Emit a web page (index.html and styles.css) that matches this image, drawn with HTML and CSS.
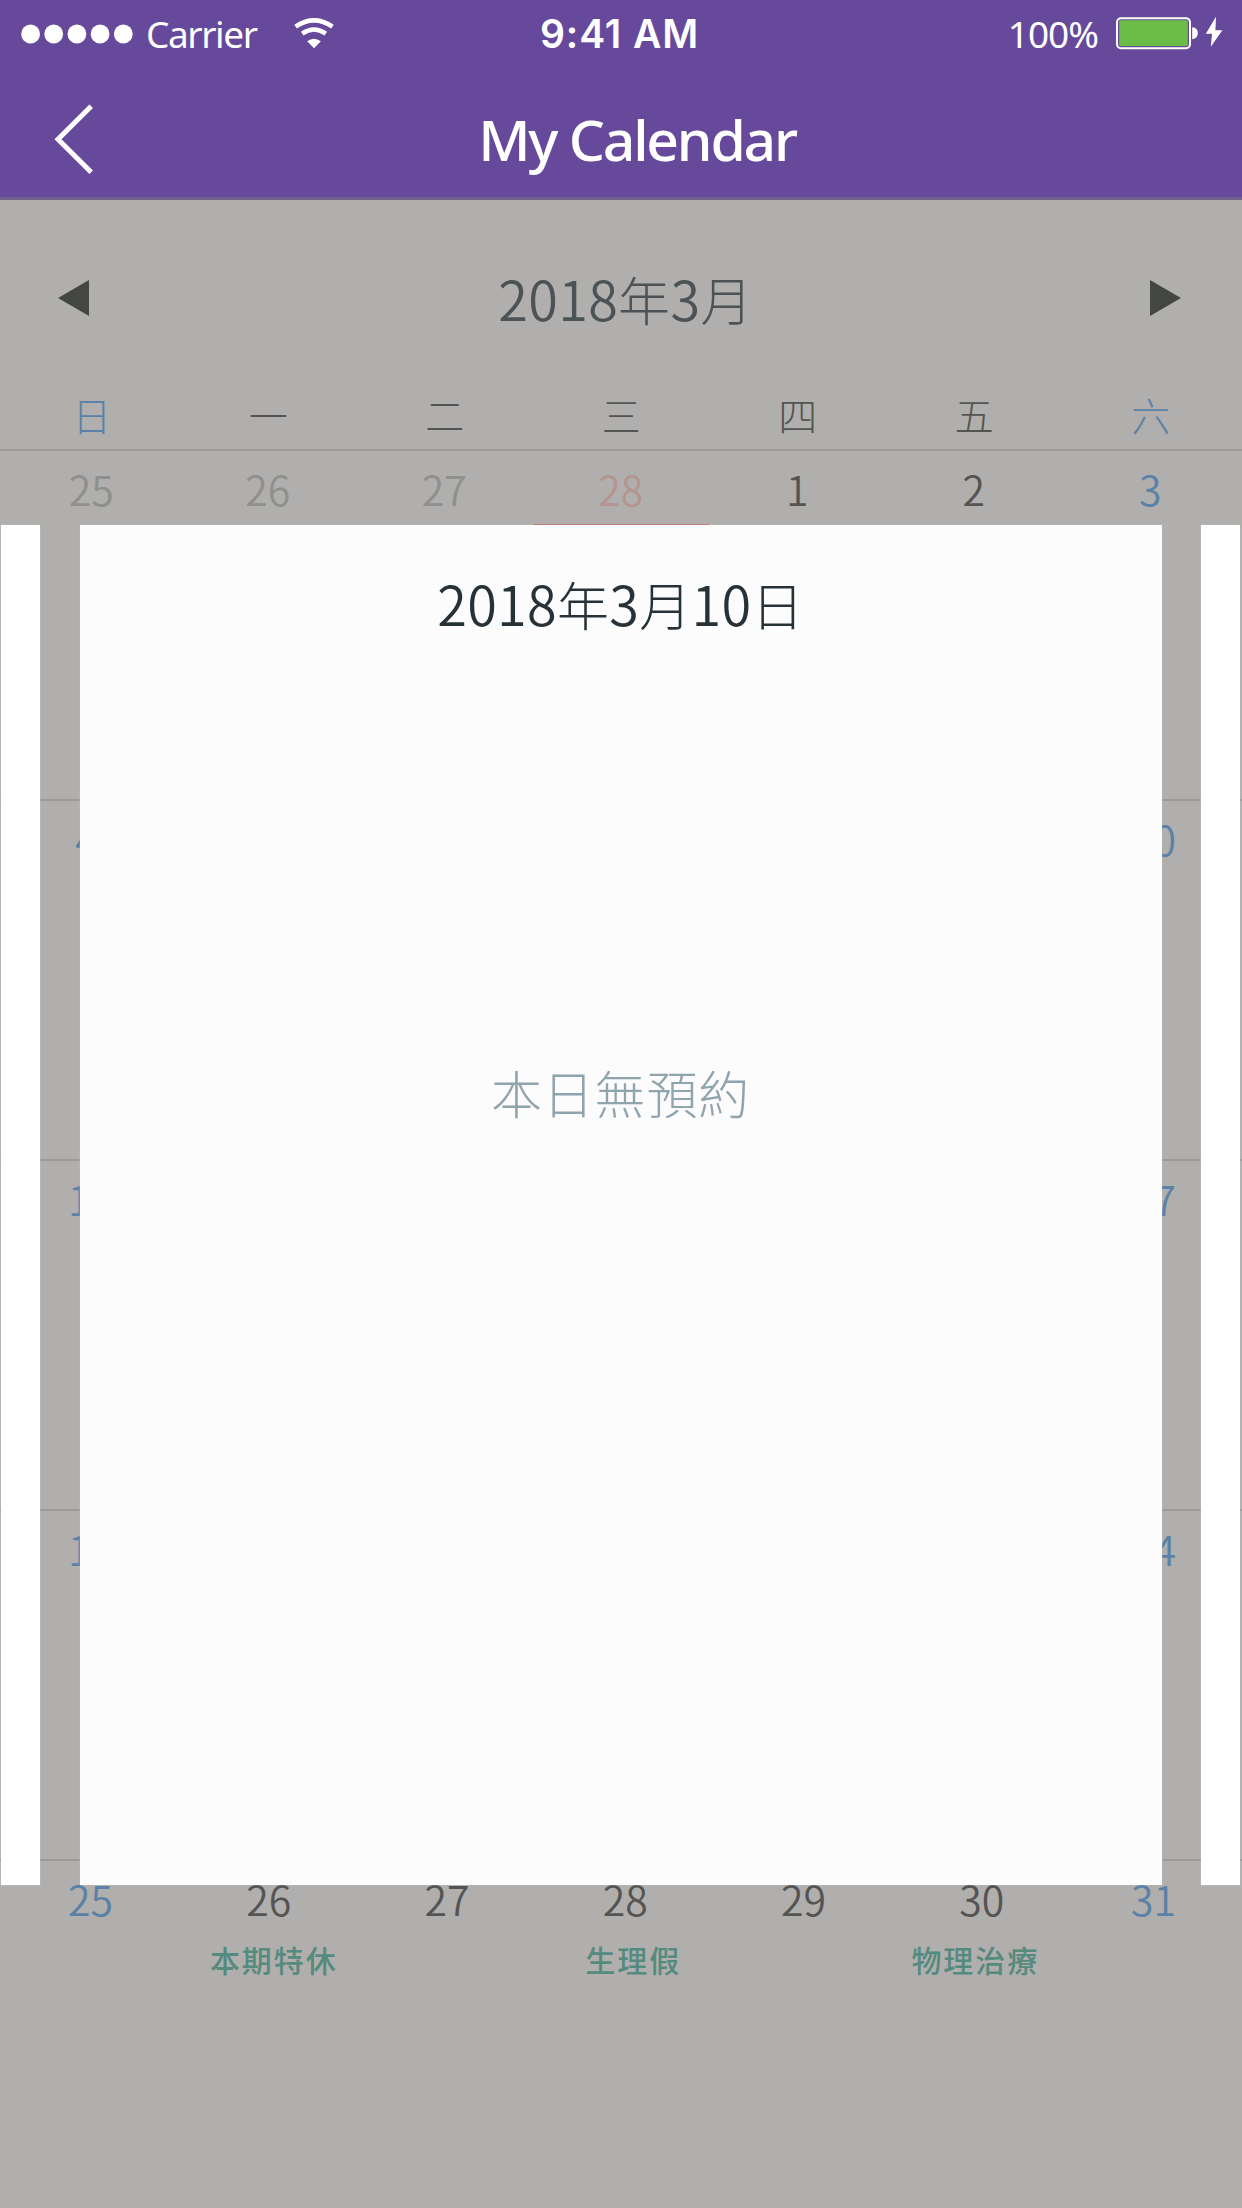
FILE: index.html
```html
<!DOCTYPE html>
<html lang="zh-Hant">
<head>
<meta charset="utf-8">
<title>My Calendar</title>
<link rel="stylesheet" href="styles.css">
</head>
<body>
<div class="screen">
  <header class="header">
    <div class="status">
      <div class="status-left">
        <svg class="dots" width="112" height="20" viewBox="0 0 112 20" fill="#fff"><circle cx="9.6" cy="10" r="9.4"/><circle cx="32.7" cy="10" r="9.4"/><circle cx="55.9" cy="10" r="9.4"/><circle cx="79.1" cy="10" r="9.4"/><circle cx="102.3" cy="10" r="9.4"/></svg>
        <span class="carrier">Carrier</span>
        <svg class="wifi" width="40" height="31" viewBox="0 0 40 31"><g fill="none" stroke="#fff" stroke-width="4.6"><path d="M1.6 8.6Q20-4 38.4 8.6"/><path d="M8.2 15.6Q20 7.4 31.8 15.6"/></g><path d="M13.2 23.2Q20 18.2 26.8 23.2L20 30.3Z" fill="#fff"/></svg>
      </div>
      <span class="time">9:41 AM</span>
      <div class="status-right">
        <span class="percent">100%</span>
        <svg class="battery" width="108" height="36" viewBox="0 0 108 36"><rect x="1" y="3.2" width="73" height="30" rx="4" fill="none" stroke="#fff" stroke-width="2"/><rect x="3.2" y="5.3" width="68.6" height="25.6" rx="1" fill="#6cbd48"/><path d="M76.2 12.2C80 12.6 81.8 14.8 81.8 18S80 23.8 76.2 24.2Z" fill="#fff"/><path d="M100 1.8L89.8 18.8H96L94.8 31.8L106.4 15.2H99.4Z" fill="#fff"/></svg>
      </div>
    </div>
    <div class="navbar">
      <svg class="back" width="40" height="72" viewBox="0 0 40 72" fill="none" stroke="#fff" stroke-width="5"><path d="M38.2 3.2L5 36.2L38.2 69.2"/></svg>
      <h1 class="nav-title">My Calendar</h1>
    </div>
  </header>
  <main class="calendar">
    <div class="month">
      <svg width="31" height="36" viewBox="0 0 31 36" fill="#444644"><path d="M31 0V36L0 18Z"/></svg>
      <h2 class="month-title">2018<span class="cjk">年</span>3<span class="cjk">月</span></h2>
      <svg width="31" height="36" viewBox="0 0 31 36" fill="#444644"><path d="M0 0V36L31 18Z"/></svg>
    </div>
    <div class="weekdays">
      <span class="weekend">日</span><span>一</span><span>二</span><span>三</span><span>四</span><span>五</span><span class="weekend">六</span>
    </div>
    <div class="week first">
      <div class="day muted">25</div><div class="day muted">26</div><div class="day muted">27</div><div class="day holiday">28<div class="holiday-box"></div></div><div class="day">1</div><div class="day">2</div><div class="day weekend">3</div>
    </div>
    <div class="week tall">
      <div class="day weekend single">4</div><div class="day">5</div><div class="day">6</div><div class="day">7</div><div class="day">8</div><div class="day">9</div><div class="day weekend">10</div>
    </div>
    <div class="week">
      <div class="day weekend">11</div><div class="day">12</div><div class="day">13</div><div class="day">14</div><div class="day">15</div><div class="day">16</div><div class="day weekend">17</div>
    </div>
    <div class="week">
      <div class="day weekend">18</div><div class="day">19</div><div class="day">20</div><div class="day">21</div><div class="day">22</div><div class="day">23</div><div class="day weekend">24</div>
    </div>
    <div class="week">
      <div class="day weekend">25</div><div class="day">26<span class="event shift-4">本期特休</span></div><div class="day">27</div><div class="day">28<span class="event shift-7">生理假</span></div><div class="day">29</div><div class="day">30<span class="event shift-back">物理治療</span></div><div class="day weekend">31</div>
    </div>
  </main>
  <div class="carousel">
    <div class="side-card"></div>
    <section class="card">
      <h2 class="card-title">2018<span class="cjk">年</span>3<span class="cjk">月</span>10<span class="cjk">日</span></h2>
      <p class="empty">本日無預約</p>
    </section>
    <div class="side-card"></div>
  </div>
</div>
</body>
</html>
```
FILE: styles.css
```css
* { box-sizing: border-box; }
body {
  margin: 0;
  font-family: "Noto Sans", "Noto Sans CJK TC", sans-serif;
  background: #b0afad;
}
h1, h2, p { margin: 0; font-weight: 400; }
svg { display: block; flex: none; }
.screen {
  position: relative;
  width: 1242px;
  height: 2208px;
  overflow: hidden;
  background: #b0afad;
}
.header {
  height: 200px;
  background: #67499c;
  border-bottom: 3px solid #71618f;
  color: #fff;
}
.status {
  display: grid;
  grid-template-columns: 1fr auto 1fr;
  align-items: center;
  height: 68px;
  padding: 0 18px 0 21px;
}
.status-left, .status-right { display: flex; align-items: center; }
.status-right { justify-content: flex-end; }
.carrier {
  width: 112px;
  margin-left: 13px;
  font-size: 37px;
  letter-spacing: -1.4px;
  line-height: 66px;
  white-space: nowrap;
}
.wifi { margin: -2px 0 0 36px; }
.time {
  margin-right: 6px;
  font: 600 39px/66px Inter, sans-serif;
  letter-spacing: 0.9px;
}
.percent {
  margin-right: 18px;
  font-size: 37px;
  letter-spacing: -1px;
  line-height: 66px;
}
.battery { margin-top: -2px; }
.navbar {
  display: grid;
  grid-template-columns: 40px 1fr 40px;
  align-items: center;
  height: 129px;
  padding: 0 53px;
}
.back { margin-top: 12px; }
.nav-title {
  padding-left: 32px;
  margin-top: 13px;
  font-size: 57px;
  font-weight: 500;
  letter-spacing: -2.2px;
  line-height: 80px;
  text-align: center;
}
.month {
  display: flex;
  justify-content: space-between;
  align-items: center;
  height: 196px;
  padding: 0 61px 0 58px;
}
.month-title, .card-title {
  font-family: "Noto Sans CJK TC", sans-serif;
  font-weight: 350;
  font-size: 54px;
  letter-spacing: 0.3px;
  line-height: 80px;
}
.month-title {
  padding-left: 12px;
  color: #4c5357;
}
.card-title { color: #263238; }
.cjk { font-weight: 300; font-size: 52px; }
.weekdays {
  display: grid;
  grid-template-columns: repeat(7, 176.5px);
  height: 53px;
  padding-left: 3.5px;
  font: 300 39px/36px "Noto Sans CJK TC", sans-serif;
  text-align: center;
  color: #545453;
}
.week {
  display: grid;
  grid-template-columns: repeat(6, 178.25px) 165px;
  height: 350px;
  padding-left: 1.5px;
  border-top: 2px solid #9c9b9a;
}
.week.first {
  grid-template-columns: repeat(7, 176.5px);
  padding-left: 3px;
}
.week.tall { height: 360px; }
.day {
  padding-top: 9px;
  font: 350 41px/56px "Noto Sans CJK TC", sans-serif;
  text-align: center;
  color: #545453;
}
.weekdays .weekend, .day.weekend { color: #5b82a6; }
.day.muted { color: #8f8f8e; }
.day.holiday { color: #b4958f; }
.day.single { padding-right: 8px; }
.holiday-box {
  height: 120px;
  margin-top: 8px;
  border-top: 2px solid #bd7468;
}
.event {
  display: block;
  margin-top: 11px;
  font: 500 30px/44px "Noto Sans CJK TC", sans-serif;
  letter-spacing: 2px;
  color: #558a7e;
}
.shift-4 { padding-left: 10px; }
.shift-7 { padding-left: 16px; }
.shift-back { padding-right: 13px; }
.carousel {
  position: absolute;
  top: 525px;
  left: 1px;
  display: flex;
  justify-content: space-between;
  width: 1239px;
  height: 1360px;
}
.side-card {
  width: 39px;
  background: #fff;
  box-shadow: 0 0 1px #d8d8d7;
}
.card {
  width: 1082px;
  padding-top: 38px;
  background: #fcfcfc;
  box-shadow: 0 0 1px #c4c4c3;
  text-align: center;
}
.empty {
  margin-top: 408px;
  font: 300 51px/80px "Noto Sans CJK TC", sans-serif;
  letter-spacing: 0.8px;
  color: #90a4ae;
}
```
